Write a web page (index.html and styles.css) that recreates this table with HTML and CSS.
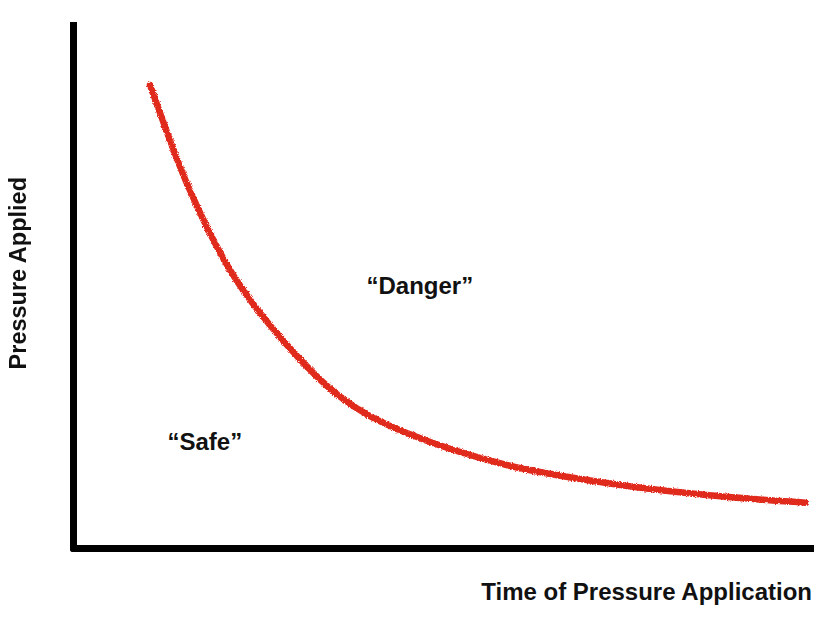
FILE: index.html
```html
<!DOCTYPE html>
<html lang="en">
<head>
<meta charset="utf-8">
<title>Pressure vs Time</title>
<link rel="stylesheet" href="styles.css">
</head>
<body>
<div class="chart">
  <div class="y-label">Pressure Applied</div>
  <div class="plot">
    <svg class="curve" viewBox="70 22 744 530" width="744" height="530" aria-hidden="true">
      <defs>
        <filter id="rough" x="-5%" y="-5%" width="110%" height="110%">
          <feTurbulence type="fractalNoise" baseFrequency="1.2" numOctaves="2" seed="5" result="noise"/>
          <feDisplacementMap in="SourceGraphic" in2="noise" scale="3.4" xChannelSelector="R" yChannelSelector="G"/>
        </filter>
      </defs>
      <path class="curve-line" filter="url(#rough)"
        d="M150,85 C156.1,101.3 173.4,152.2 186.7,183
           C200,213.8 214.5,244.3 230,270
           C245.6,295.7 261.7,315.9 280,337
           C298.3,358.1 318.9,380.7 340,396.7
           C361.1,412.7 378.9,421.6 406.7,433
           C434.5,444.4 473.4,456.7 506.7,465
           C540,473.3 573.4,478 606.7,483
           C640,488 674,491.7 706.7,495
           C739.4,498.3 787,501.4 805,502.7"/>
    </svg>
    <span class="zone zone-danger">“Danger”</span>
    <span class="zone zone-safe">“Safe”</span>
  </div>
  <div class="x-label">Time of Pressure Application</div>
</div>
</body>
</html>
```
FILE: styles.css
```css
html, body {
  margin: 0;
  padding: 0;
  background: #ffffff;
}

body {
  width: 827px;
  height: 620px;
  overflow: hidden;
  font-family: "Liberation Sans", Arial, Helvetica, sans-serif;
  font-weight: bold;
  font-size: 24px;
  line-height: 1;
  color: #111111;
}

.chart {
  display: grid;
  grid-template-columns: 70px 744px;
  grid-template-rows: 530px auto;
  padding-top: 22px;
}

.y-label {
  grid-column: 1;
  grid-row: 1;
  align-self: start;
  justify-self: start;
  margin-top: 155px;
  margin-left: 6.5px;
  font-size: 23.5px;
  writing-mode: vertical-rl;
  transform: rotate(180deg);
  white-space: nowrap;
}

.plot {
  grid-column: 2;
  grid-row: 1;
  position: relative;
  border-left: 7px solid #000000;
  border-bottom: 7px solid #000000;
  border-bottom-left-radius: 3px;
}

.curve {
  position: absolute;
  left: -7px;
  top: 0;
  overflow: visible;
}

.curve-line {
  fill: none;
  stroke: #df2a1e;
  stroke-width: 6.5;
  stroke-linecap: round;
  stroke-linejoin: round;
}

.zone {
  position: absolute;
  white-space: nowrap;
}

.zone-danger {
  left: 289.5px;
  top: 251.9px;
}

.zone-safe {
  left: 90.5px;
  top: 407.5px;
}

.x-label {
  grid-column: 2;
  grid-row: 2;
  justify-self: end;
  margin-top: 28px;
  margin-right: 2px;
  white-space: nowrap;
}
```
